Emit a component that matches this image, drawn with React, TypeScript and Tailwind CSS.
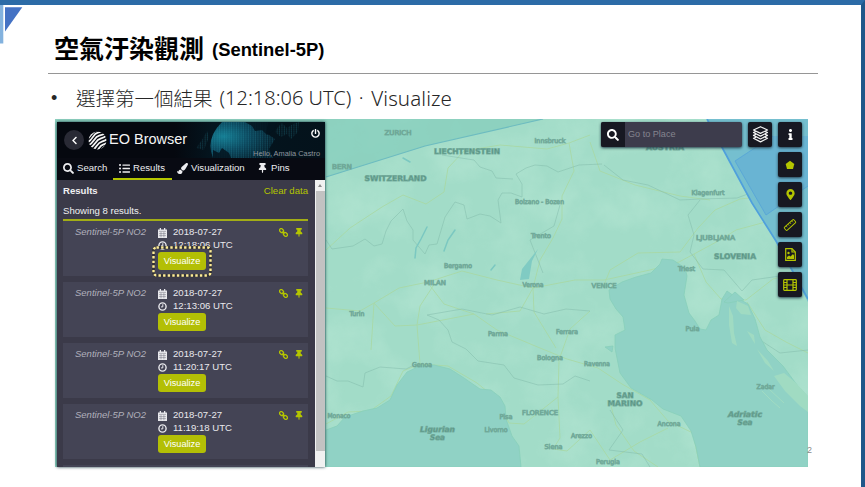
import React from "react";
import { FaChevronLeft, FaPowerOff, FaSearch, FaListUl, FaPaintBrush, FaThumbtack, FaInfo, FaMapMarkerAlt } from "react-icons/fa";

const sans = "font-['Liberation_Sans',Arial,sans-serif]";

type Label = { x: number; y: number; t: string; w: number; kind?: "country" | "sea" };

const labels: Label[] = [
  { x: 398, y: 134.5, t: "ZURICH", w: 27 },
  { x: 467, y: 153.5, t: "LIECHTENSTEIN", w: 66, kind: "country" },
  { x: 395.5, y: 181, t: "SWITZERLAND", w: 62, kind: "country" },
  { x: 342, y: 168.5, t: "BERN", w: 20 },
  { x: 550, y: 143, t: "Innsbruck", w: 31 },
  { x: 539.5, y: 204, t: "Bolzano - Bozen", w: 49 },
  { x: 541, y: 238, t: "Trento", w: 20 },
  { x: 458, y: 267.5, t: "Bergamo", w: 28 },
  { x: 435, y: 284.5, t: "MILAN", w: 22 },
  { x: 533, y: 287, t: "Verona", w: 21 },
  { x: 604, y: 287.5, t: "VENICE", w: 25 },
  { x: 357, y: 316, t: "Turin", w: 15 },
  { x: 498, y: 336, t: "Parma", w: 20 },
  { x: 567, y: 333.5, t: "Ferrara", w: 22 },
  { x: 550, y: 360, t: "Bologna", w: 26 },
  { x: 597, y: 366, t: "Ravenna", w: 26 },
  { x: 422, y: 367, t: "Genoa", w: 20 },
  { x: 339, y: 417.5, t: "Monaco", w: 23 },
  { x: 506, y: 418.5, t: "Pisa", w: 13 },
  { x: 540, y: 415, t: "FLORENCE", w: 36 },
  { x: 496, y: 432, t: "Livorno", w: 23 },
  { x: 581.5, y: 437.5, t: "Arezzo", w: 21 },
  { x: 553.5, y: 448.5, t: "Siena", w: 18 },
  { x: 608, y: 464, t: "Perugia", w: 24 },
  { x: 625, y: 398, t: "SAN", w: 17, kind: "country" },
  { x: 625, y: 406, t: "MARINO", w: 35, kind: "country" },
  { x: 669, y: 426, t: "Ancona", w: 23 },
  { x: 437.5, y: 432, t: "Ligurian", w: 35, kind: "sea" },
  { x: 437.5, y: 439.5, t: "Sea", w: 15, kind: "sea" },
  { x: 745, y: 416.5, t: "Adriatic", w: 34, kind: "sea" },
  { x: 745, y: 424.5, t: "Sea", w: 15, kind: "sea" },
  { x: 692.5, y: 331, t: "Pula", w: 14 },
  { x: 765.5, y: 388.5, t: "Zadar", w: 18 },
  { x: 708, y: 194.5, t: "Klagenfurt", w: 33 },
  { x: 715.5, y: 239.5, t: "LJUBLJANA", w: 39 },
  { x: 735, y: 258.5, t: "SLOVENIA", w: 42, kind: "country" },
  { x: 686.5, y: 270.5, t: "Triest", w: 17 },
  { x: 665, y: 149.5, t: "AUSTRIA", w: 38, kind: "country" },
];

function MapCanvas() {
  return (
    <svg className="absolute inset-0 h-full w-full" viewBox="55 119 753 348" preserveAspectRatio="none">
      <defs>
        <filter id="terrain" x="0" y="0" width="100%" height="100%">
          <feTurbulence type="fractalNoise" baseFrequency="0.022" numOctaves="4" seed="8" />
          <feColorMatrix values="0 0 0 0 .53  0 0 0 0 .84  0 0 0 0 .7  2.4 0 0 0 -1" />
        </filter>
      </defs>
      <rect x="55" y="119" width="753" height="348" fill="#a2dcc8" />
      <rect x="55" y="119" width="753" height="348" filter="url(#terrain)" opacity=".35" />
      <path d="M55 119H543L425 146L326 177V467H55Z" fill="#86cdbc" opacity=".75" />
      <path d="M326 177L425 146L543 119" fill="none" stroke="#6dbcc0" strokeWidth="1.2" />

      <g fill="none" stroke="#a9d8a2" strokeWidth="1" opacity=".8">
        <path d="M326 308L360 311L374 303L399 288L428 282L462 271L497 280L533 288L575 280L604 280L650 270L679 262L694 254L720 240L736 230L773 220L808 205" />
        <path d="M326 250L350 228L382 207L403 195L426 204L444 192L448 168L464 151L500 145L547 149L569 143L590 135" />
        <path d="M374 303L371 350M374 303L395 326L417 325L474 314L497 330L540 348L567 359L598 368L622 384L650 400L668 421L693 433L700 467" />
        <path d="M417 325L420 364M428 283L444 304L474 314M435 283L420 306L417 325M533 288L520 311L486 314M569 143L574 171L562 196L562 219L553 238L540 260L533 288L534 312L556 348" />
        <path d="M559 360L558 397L524 424L509 423M558 397L560 438L553 449L567 451L590 430L610 460L640 442L668 428M590 311L570 329L559 360" />
        <path d="M420 364L403 371L391 396L370 411L348 412L326 424M420 364L448 366L477 383L498 400L509 423M604 285L610 270L638 253L680 252L698 228L715 210L740 199L786 194" />
        <path d="M590 142L600 171L635 185L680 196L710 200M694 254L706 282L721 299L746 300L773 279L808 270M747 302L765 330L786 342L808 353M770 386L788 397M610 402L616 425L634 451L658 467" />
      </g>
      <g fill="none" stroke="#80b9a8" strokeWidth=".8" strokeLinejoin="round" opacity=".6">
        <path d="M326 240L332 249L353 246L365 239L374 246L382 244L386 231L391 221L403 209L407 221L413 230L413 240L425 254L429 245L437 244L445 217L455 202L464 205L467 219L480 214L490 216L501 223L498 200L502 193L511 193L522 197L522 184L516 174L526 168L535 165L547 166L558 172L579 165L602 164" />
        <path d="M442 155L474 160L480 167L492 171L496 178L513 179M326 376L337 381L348 381L363 387L365 373L380 367L406 369L416 364M427 315L439 320L448 330L452 342L466 349L478 361L504 365L514 378L538 385L563 384L575 376L590 381" />
        <path d="M604 165L623 180L648 185L680 200L700 199L737 198L786 180M700 200L688 215L694 235L690 252L703 269L724 270L742 291L752 280L780 276L808 280" />
        <path d="M590 311L566 309L544 314L520 307L492 315L462 309L427 315M610 410L623 430L609 450L642 454L650 467M560 205L554 226L530 240L543 273M808 350L780 353L757 338L738 297" />
      </g>
      <path d="M427 227L421 239L416 248L415 258M455 230L448 240L444 251M403 158L410 162M495 265L491 270" fill="none" stroke="#7bc8c1" strokeWidth="1.5" strokeLinecap="round" />
      <path d="M538 249L532 261L529 279L520 280L522 269Z" fill="#80cbc3" />

      <g fill="#90d2c5" stroke="#88cfba" strokeWidth=".8">
        <path d="M326 430L337 426L345 417L363 411L377 408L390 400L397 385L407 372L420 366L434 365L450 369L464 378L480 389L491 390L500 397L505 406L506 419L512 436L519 446L521 467H326Z" />
        <path d="M700 467L696 447L691 431L681 416L663 409L652 400L631 388L620 373L615 348L615 335L625 330L623 317L616 309L610 299L609 290L622 282L636 277L651 273L660 264L662 259L673 260L685 268L687 276L684 295L689 313L695 321L700 329L706 330L711 320L719 315L722 299L727 291L734 296L748 304L755 319L760 337L767 350L783 366L797 385L808 397V467Z" />
        <path d="M724 302L735 292L744 300L728 303ZM605 347L613 346L612 352Z" />
      </g>
      <g fill="#a0dbc2">
        <path d="M729 306L733 316L734 333L737 346L732 343L729 325ZM737 301L748 306L751 315L741 314L736 308ZM757 349L768 361L774 371L765 363ZM747 331L754 335L755 344ZM774 376L785 391L800 406L808 412V396L795 382L784 373Z" />
        <path d="M762 391L772 401L780 408M769 389L784 403" fill="none" stroke="#a0dbc2" strokeWidth="1" />
      </g>

      <path d="M707 119H808V302L776 241L752 203L724 151Z" fill="#75bfcf" />
      <path d="M735 161L773 136H808V186L766 215Z" fill="#69b4d3" />
      <path d="M735 161L773 136M735 161L766 215L808 186" fill="none" stroke="#58a6d7" strokeWidth=".9" />
      <path d="M707 119L724 151L752 203L776 241L808 299" fill="none" stroke="#4fa0dc" strokeWidth="1.700" />

      {labels.map((l, i) => {
        const major = l.kind !== undefined;
        return (
          <text
            key={i} x={l.x} y={l.y} textAnchor="middle" textLength={l.w} lengthAdjust="spacingAndGlyphs"
            fontFamily="'DejaVu Sans', sans-serif" fontSize={major ? 7.6 : 6.6} fontWeight={major ? 700 : 400}
            fontStyle={l.kind === "sea" ? "italic" : "normal"} fill={major ? "#4f8b7b" : "#669b8b"}
            stroke="#6fa898" strokeWidth={0.9} strokeOpacity=".8"
          >
            {l.t}
          </text>
        );
      })}
    </svg>
  );
}

function GlobeArt() {
  return (
    <svg className="absolute inset-0 h-full w-full" viewBox="57 122 268 36">
      <defs>
        <radialGradient id="globe" cx=".2" cy=".4" r=".8">
          <stop offset="0" stopColor="#147c92" /><stop offset=".5" stopColor="#0b465c" /><stop offset="1" stopColor="#051c29" />
        </radialGradient>
        <linearGradient id="space" x1="0" x2="1"><stop offset="0" stopColor="#05080f" /><stop offset=".25" stopColor="#04151f" /><stop offset="1" stopColor="#04121b" /></linearGradient>
        <pattern id="mesh" width="2.400" height="2" patternUnits="userSpaceOnUse">
          <circle cx="1.100" cy="1" r=".6" fill="#2fa3b8" />
        </pattern>
      </defs>
      <path d="M175 122H325V158H175Z" fill="url(#space)" />
      <path d="M222 122Q205 139 213 158H273L269 149L275 139L266 133L268 122Z" fill="url(#globe)" />
      <path d="M222 122Q205 139 213 158H273L269 149L275 139L266 133L268 122Z" fill="url(#mesh)" opacity=".5" />
      <path d="M213 150L219 153L222 148L229 153L231 158H213ZM245 122H277L274 130L267 135L262 130L255 131L252 126Z" fill="#04141f" opacity=".85" />
      <path d="M278 127L282 123L287 128L293 124L299 122L298 132L291 139L287 134L281 137L275 132ZM207 131L209 137L204 150L196 148L202 140Z" fill="url(#mesh)" opacity=".5" />
    </svg>
  );
}

function SentinelLogo() {
  return (
    <svg className="h-[19px] w-[19px]" viewBox="0 0 19 19">
      <defs><clipPath id="disc"><circle cx="9.5" cy="9.5" r="9" /></clipPath></defs>
      <g clipPath="url(#disc)">
        <g fill="none" stroke="#f5f5f5" strokeWidth="1.750" transform="rotate(-24 9.500 9.500)">
          <path d="M-3 4C5 5 7 -1 13 0M-3 7.300C6 8 7 1.500 13 2.500S18 3 22 2M-3 10.500C6 11 7 5 13 5.800S18 6 22 5M-3 13.700C6 14 7 8.200 13 9S18 9 22 8M-3 17C6 17 7 11.400 13 12.200S18 12 22 11M2 19.500C7 19 9 14.800 13 15.500S18 15.500 22 14M9 20C11 18 13 18 20 17.500" />
        </g>
      </g>
    </svg>
  );
}

function CalendarIcon() {
  return (
    <svg className="h-[10px] w-[9px]" viewBox="0 0 9 10" fill="currentColor">
      <path d="M0 1.500H9V10H0Z" /><path d="M1.700 0H3V2.500H1.700ZM6 0H7.300V2.500H6Z" />
      <path d="M1 3.400H8M1 5.600H8M1 7.600H8M3 3.800V9.300M5.900 3.800V9.300" stroke="#444455" strokeWidth=".35" />
    </svg>
  );
}

function ClockIcon() {
  return (
    <svg className="h-[9px] w-[9px]" viewBox="0 0 9 9" fill="none" stroke="currentColor">
      <circle cx="4.500" cy="4.500" r="3.600" strokeWidth="1.400" /><path d="M4.800 2.200V4.900H3" strokeWidth="1" />
    </svg>
  );
}

function LinkIcon() {
  return (
    <svg className="h-[9px] w-[9px]" viewBox="0 0 9 9" fill="none" stroke="currentColor" strokeWidth="1.300">
      <g transform="rotate(45 4.500 4.500)"><rect x="-.4" y="2.900" width="4.400" height="3.200" rx="1.500" /><rect x="5" y="2.900" width="4.400" height="3.200" rx="1.500" /><path d="M3 4.500H6" /></g>
    </svg>
  );
}

function Header() {
  return (
    <header className="relative h-[36px] shrink-0 bg-[#05080f]">
      <GlobeArt />
      <div className="relative flex h-full items-center pl-[7px]">
        <span className="flex h-[20px] w-[20px] items-center justify-center rounded-full bg-[#292a35] text-[9px] text-white"><FaChevronLeft /></span>
        <span className="ml-[4px]"><SentinelLogo /></span>
        <span className="ml-[2px] text-[14.5px] text-[#f4f4f4]">EO Browser</span>
        <div className="ml-auto flex h-full flex-col items-end justify-between pt-[7px] pr-[5px] text-white">
          <FaPowerOff className="h-[9px] w-[9px]" />
          <span className="text-[7.4px] leading-[8px] text-[#8f969e]">Hello, Amalia Castro</span>
        </div>
      </div>
    </header>
  );
}

function Tabs() {
  return (
    <nav className="flex h-[22px] shrink-0 bg-[#080a12] text-[9.6px] text-[#ededf0]">
      <span className="flex w-[56px] items-center gap-[3px] pb-[2px] pl-[6px]"><FaSearch className="h-[11px] w-[11px]" />Search</span>
      <span className="flex w-[59px] items-center gap-[3px] border-b-2 border-[#b4c500] pl-[6px]"><FaListUl className="h-[11px] w-[11px]" />Results</span>
      <span className="flex w-[83px] items-center gap-[3px] pb-[2px] pl-[5px]"><FaPaintBrush className="h-[11px] w-[11px] shrink-0" />Visualization</span>
      <span className="flex items-center gap-[4px] pb-[2px] pl-[3px]"><FaThumbtack className="h-[10px] w-[9px]" />Pins</span>
    </nav>
  );
}

function ResultCard({ time, highlighted }: { time: string; highlighted?: boolean }) {
  return (
    <article className="mb-[6px] flex h-[55px] shrink-0 bg-[#444455] pt-[5px] text-[9.6px] text-[#e9e9ed]">
      <span className="w-[95px] pl-[12px] text-[9.5px] leading-[12px] text-[#b0b0bb] italic">Sentinel-5P NO2</span>
      <div className="w-[110px]">
        <div className="flex h-[13px] items-center gap-[6px]"><CalendarIcon />2018-07-27</div>
        <div className="flex h-[13px] items-center gap-[6px]"><ClockIcon />{time}</div>
        <div className="relative h-[18px] w-[48px]">
          <button className="block h-[18px] w-[48px] rounded-[3px] bg-[#b3bf05] text-center text-[9.2px] leading-[18px] text-white">Visualize</button>
          {highlighted && (
            <svg className="absolute -top-[6px] -left-[6px] h-[31px] w-[60px]" viewBox="0 0 60 31">
              <rect x="1.500" y="1.500" width="57" height="28" rx="3" fill="none" stroke="#333336" strokeWidth="3" />
              <rect x="1.500" y="1.500" width="57" height="28" rx="3" fill="none" stroke="#ffed98" strokeWidth="2.400" strokeDasharray="2.400 2.200" />
            </svg>
          )}
        </div>
      </div>
      <div className="ml-auto flex h-[13px] items-center gap-[7px] pr-[5px] text-[#b4c500]">
        <LinkIcon />
        <FaThumbtack className="h-[9px] w-[8px]" />
      </div>
    </article>
  );
}

function Sidebar() {
  return (
    <aside className={`${sans} relative flex h-[345px] w-[268px] flex-col overflow-hidden bg-[#3b3a49] shadow-[0_0_3px_#17363f]`}>
      <Header />
      <Tabs />
      <div className="flex min-h-0 flex-1">
        <div className="flex w-[258px] flex-col overflow-hidden pr-[7px] pl-[6px] text-[9.6px] text-[#f0f0f2]">
          <div className="flex h-[22px] shrink-0 items-center justify-between pt-px">
            <b>Results</b><span className="text-[9.6px] text-[#b4c500]">Clear data</span>
          </div>
          <div className="flex h-[19px] shrink-0 items-center border-b-2 border-[#a2ad16] pt-[2px]">Showing 8 results.</div>
          <div className="flex flex-col">
            <ResultCard time="12:18:06 UTC" highlighted />
            <ResultCard time="12:13:06 UTC" />
            <ResultCard time="11:20:17 UTC" />
            <ResultCard time="11:19:18 UTC" />
            <div className="h-[4px] shrink-0 bg-[#444455]" />
          </div>
        </div>
        <div className="flex w-[10px] flex-col items-center bg-[#f1f1f1]">
          <div className="flex h-[11px] items-center"><i className="h-0 w-0 border-x-[2.500px] border-b-[3px] border-x-transparent border-b-[#8b8b8b]" /></div>
          <div className="h-[260px] w-[9px] bg-[#c2c2c2]" />
        </div>
      </div>
    </aside>
  );
}

const tile = "flex items-center justify-center rounded-[2px] bg-[#171822] shadow-[0_1px_3px_#233c49]";

function MapControls() {
  return (
    <div className={`${sans} relative mt-[3px] mr-[6px] ml-auto flex items-start gap-[6px]`}>
      <div className="flex h-[25px] w-[141px] overflow-hidden rounded-[2px] bg-[#3d3c4c] shadow-[0_1px_3px_#233c49]">
        <span className="flex w-[24px] items-center justify-center bg-[#171822] text-[12px] text-white"><FaSearch /></span>
        <span className="pl-[3px] text-[9.1px] leading-[25px] text-[#85858f]">Go to Place</span>
      </div>
      <div className={`${tile} h-[25px] w-[24px]`}>
        <svg className="h-[17px] w-[17px]" viewBox="0 0 17 17" fill="#171822" stroke="#f5f5f5" strokeWidth="1.200" strokeLinejoin="round">
          <path d="M4 11.200L1.500 12.300L8.500 15.900L15.500 12.300L13 11.200" />
          <path d="M4 8.300L1.500 9.400L8.500 13L15.500 9.400L13 8.300" />
          <path d="M4 5.400L1.500 6.500L8.500 10.100L15.500 6.500L13 5.400" />
          <path d="M1.500 4L8.500 .7L15.500 4L8.500 7.400Z" />
        </svg>
      </div>
      <div className="flex flex-col gap-[5px] text-[#b4c500]">
        <div className={`${tile} h-[25px] w-[24px] text-[11px] text-white`}><FaInfo /></div>
        <div className={`${tile} h-[25px] w-[24px]`}><svg className="h-[10px] w-[10px]" viewBox="0 0 10 10"><path d="M5 .8L9.300 4L8 9H2L.7 4Z" fill="currentColor" /></svg></div>
        <div className={`${tile} h-[25px] w-[24px] text-[11px]`}><FaMapMarkerAlt /></div>
        <div className={`${tile} h-[25px] w-[24px]`}>
          <svg className="h-[14px] w-[14px]" viewBox="0 0 14 14" fill="none" stroke="currentColor">
            <g transform="rotate(-42 7 7)"><rect x=".6" y="5" width="12.800" height="4" rx="1" /><path d="M3.500 5v2M6 5v2M8.500 5v2M11 5v2" strokeWidth=".7" /></g>
          </svg>
        </div>
        <div className={`${tile} h-[25px] w-[24px]`}>
          <svg className="h-[13px] w-[11px]" viewBox="0 0 11 13" fill="none" stroke="currentColor" strokeWidth="1.200">
            <path d="M.7.700H7L10.300 4V12.300H.7Z" /><path d="M7 .7V4H10.300" /><path d="M2 11V9L4 7.500L5.500 8.500L8 6L9 7.500V11Z" fill="currentColor" stroke="none" /><circle cx="3.500" cy="5" r="1.200" fill="currentColor" stroke="none" />
          </svg>
        </div>
        <div className={`${tile} h-[25px] w-[24px]`}>
          <svg className="h-[12px] w-[14px]" viewBox="0 0 14 12" fill="none" stroke="currentColor" strokeWidth="1.200">
            <rect x=".7" y=".7" width="12.600" height="10.600" rx=".8" /><path d="M4 1v10M10 1v10M4 6h6M1 3.500h3M1 6h3M1 8.500h3M10 3.500h3M10 6h3M10 8.500h3" />
          </svg>
        </div>
      </div>
    </div>
  );
}

export default function App() {
  return (
    <div className="relative flex h-[487px] w-[865px] flex-col overflow-hidden border-t-[5px] border-r-[4px] border-t-[#2c6ba7] border-r-[#20578a] bg-white">
      <svg className="absolute top-0 left-0 h-[40px] w-[24px]" viewBox="0 0 24 40">
        <path d="M0 0H3.300V38.500H0Z" fill="#83b2de" /><path d="M5 2.300H22.300L5 26.500Z" fill="#4472c4" />
      </svg>
      <h1 className="ml-[48px] flex h-[69px] w-[770px] shrink-0 items-start border-b border-[#969696] pl-[6px] font-bold text-black">
        <span className="pt-[24px] font-['Noto_Sans_CJK_TC',sans-serif] text-[25px] leading-[37px]">空氣汙染觀測</span>
        <span className={`${sans} ml-[8px] pt-[34px] text-[18.400px] leading-[22px]`}>(Sentinel-5P)</span>
      </h1>
      <div className="flex h-[45px] shrink-0 items-center pt-[3px] pl-[51px] text-[19.5px] font-light text-[#262626]">
        <span className={`${sans} w-[25px] text-[18px]`}>•</span>
        <span className="font-['Noto_Sans_CJK_TC',sans-serif]">選擇第一個結果</span>
        <span className="ml-[7px] font-['Noto_Sans','Open_Sans',sans-serif] text-[20px] whitespace-pre">(12:18:06 UTC)</span>
        <span className={`${sans} w-[20px] text-center text-[16px] font-normal`}>·</span>
        <span className="font-['Noto_Sans','Open_Sans',sans-serif] text-[20.500px] tracking-[0.100px]">Visualize</span>
      </div>
      <main className="relative ml-[55px] flex h-[348px] w-[753px] shrink-0 items-start pt-[3px] pl-[2px]">
        <MapCanvas />
        <Sidebar />
        <div className="-mt-[3px] flex flex-1"><MapControls /></div>
        <span className={`${sans} absolute -right-[4px] bottom-[11px] text-[9px] leading-[11px] text-[#8c8c8c]`}>2</span>
      </main>
    </div>
  );
}
